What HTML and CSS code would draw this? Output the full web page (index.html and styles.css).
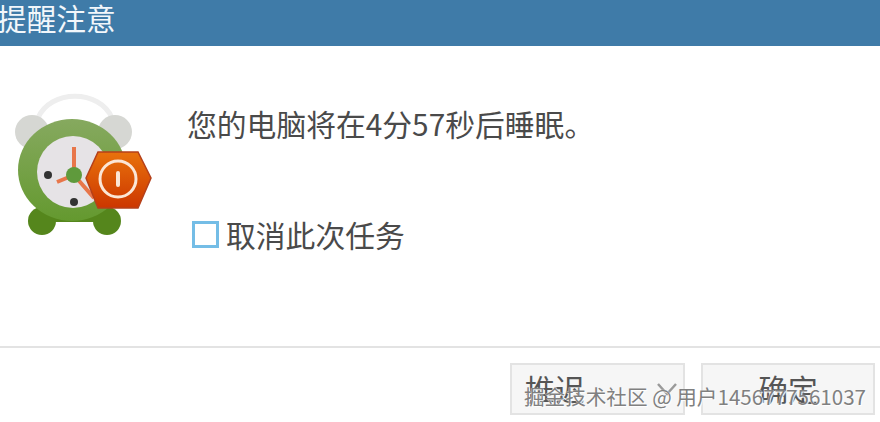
FILE: index.html
```html
<!DOCTYPE html>
<html lang="zh-CN">

<head>
  <meta charset="UTF-8">
  <meta name="viewport" content="width=device-width, initial-scale=1.0">
  <title>提醒注意</title>
  <link rel="stylesheet" href="styles.css">
</head>

<body>
  <div class="dialog">
    <div class="title-bar">提醒注意</div>

    <div class="dialog-body">
      <svg class="clock-icon" width="140" height="146" viewBox="0 0 140 146">
        <defs>
          <linearGradient id="ringGrad" x1="0" y1="0" x2="0" y2="1">
            <stop offset="0" stop-color="#86a95f" />
            <stop offset="1" stop-color="#64992f" />
          </linearGradient>
          <linearGradient id="hexGrad" x1="0" y1="0" x2="0" y2="1">
            <stop offset="0" stop-color="#e8720c" />
            <stop offset="1" stop-color="#cc3600" />
          </linearGradient>
        </defs>
        <!-- 把手和铃 -->
        <path d="M38 24 C50 -5 100 -5 112 24" fill="none" stroke="#eeeeee" stroke-width="5" />
        <circle cx="32" cy="38" r="17" fill="#d6d7d3" />
        <circle cx="115" cy="38" r="17" fill="#d6d7d3" />
        <!-- 脚 -->
        <circle cx="42" cy="127" r="14" fill="#55861c" />
        <circle cx="107" cy="127" r="14" fill="#55861c" />
        <rect x="42" y="114" width="65" height="14" fill="#55861c" />
        <!-- 钟面 -->
        <ellipse cx="72" cy="76" rx="54" ry="51" fill="url(#ringGrad)" />
        <circle cx="73" cy="78" r="36" fill="#e6e3e6" />
        <circle cx="48" cy="81" r="4" fill="#333333" />
        <circle cx="74" cy="108" r="4" fill="#333333" />
        <path d="M74 81 V53 M74 81 L57 88 M74 81 L94 104" stroke="#e8764a" stroke-width="4" fill="none" />
        <circle cx="74" cy="81" r="8" fill="#5f9a3c" />
        <!-- 电源角标 -->
        <polygon points="86,84 98,58 138,58 151,84 138,114 98,114" fill="url(#hexGrad)" stroke="#b5401a" stroke-width="1.5" />
        <circle cx="118" cy="85" r="18" fill="none" stroke="#fbe6d6" stroke-width="3" />
        <rect x="116" y="77" width="4" height="16" rx="2" fill="#fbe6d6" />
      </svg>

      <div class="message-col">
        <p class="message">您的电脑将在4分57秒后睡眠。</p>
        <label class="cancel-row">
          <span class="checkbox"></span>
          <span>取消此次任务</span>
        </label>
      </div>
    </div>

    <div class="dialog-footer">
      <div class="btn btn-delay">推迟
        <svg class="caret" width="22" height="14" viewBox="0 0 22 14">
          <path d="M2 1 L11 11 L20 1" fill="none" stroke="#9a9a9a" stroke-width="2.5" />
        </svg>
      </div>
      <div class="btn btn-ok">确定</div>
    </div>
  </div>

  <div class="watermark">掘金技术社区 @ 用户1456777561037</div>
</body>

</html>
```

FILE: styles.css
```css
html,
body {
  margin: 0;
  height: 100%;
  overflow: hidden;
}

body {
  font-family: "Noto Sans CJK SC", "Liberation Sans", sans-serif;
  background-color: white;
  color: #4a4a4a;
}

.dialog {
  display: flex;
  flex-direction: column;
  height: 422px;
}

.title-bar {
  height: 46px;
  line-height: 35px;
  text-indent: -3px;
  background-color: #3f7ba8;
  color: #f2f7fb;
  font-size: 29.7px;
  flex-shrink: 0;
}

.dialog-body {
  display: flex;
  height: 302px;
  flex-shrink: 0;
  border-bottom: 2px solid #e3e3e3;
  box-sizing: border-box;
}

.clock-icon {
  margin-top: 48px;
  flex-shrink: 0;
  overflow: visible;
  filter: blur(0.6px);
}

.message-col {
  margin-left: 47px;
  padding-top: 56px;
}

.message {
  margin: 0;
  font-size: 29.8px;
  line-height: 42px;
}

.cancel-row {
  display: flex;
  align-items: center;
  gap: 7px;
  margin-top: 69px;
  margin-left: 5px;
  font-size: 29.8px;
  line-height: 42px;
}

.checkbox {
  width: 21px;
  height: 21px;
  border: 3px solid #74bde6;
}

.dialog-footer {
  display: flex;
  justify-content: flex-end;
  gap: 16px;
  padding: 15px 5px 0 0;
}

.btn {
  position: relative;
  width: 170px;
  height: 48px;
  border: 2px solid #e3e3e3;
  background-color: #f6f6f6;
  font-size: 29.8px;
  line-height: 46px;
  text-align: center;
  color: #555;
}

.btn-delay {
  text-align: left;
  padding-left: 13px;
  width: 158px;
}

.caret {
  position: absolute;
  right: 5px;
  top: 18px;
}

.watermark {
  position: absolute;
  left: 524px;
  top: 382px;
  font-size: 20.6px;
  line-height: 28px;
  white-space: nowrap;
  color: #808080;
  text-shadow: 0 0 1px white, 1px 1px 1px white;
}
```
